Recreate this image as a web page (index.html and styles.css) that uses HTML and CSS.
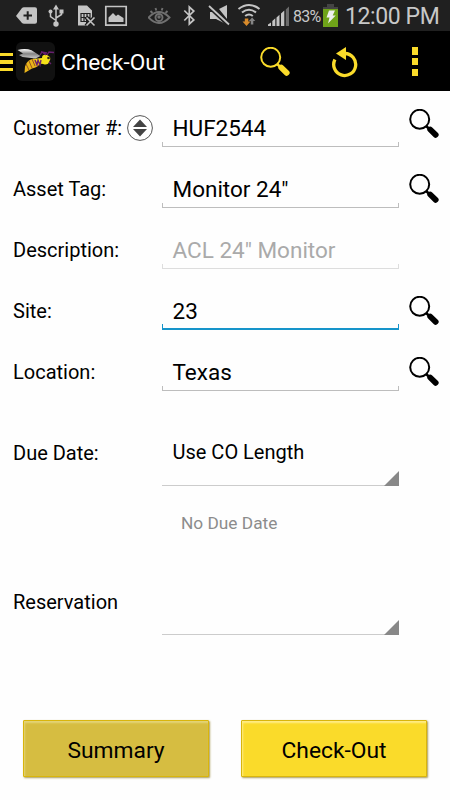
FILE: index.html
```html
<!DOCTYPE html>
<html lang="en">
<head>
<meta charset="utf-8">
<title>Check-Out</title>
<link rel="stylesheet" href="styles.css">
</head>
<body>
<svg width="0" height="0" class="defs">
  <symbol id="search" viewBox="0 0 30 30">
    <circle cx="10.7" cy="10.3" r="9.5" fill="none" stroke="currentColor" stroke-width="2"/>
    <path d="M17.3 17.2l4 3.6" stroke="currentColor" stroke-width="2.6"/>
    <path d="M21.2 20.5l5.500 5.300" stroke="currentColor" stroke-width="5.800" stroke-linecap="round"/>
  </symbol>
</svg>
<div class="status">
  <svg class="notices" width="150" height="31" viewBox="0 0 150 31">
    <path fill="#c4c4c4" d="M16 16l6-8q.7-.8 2-.8h11q2 0 2 2v12.600q0 2-2 2H24q-1.300 0-2-.8z"/>
    <path stroke="#202020" stroke-width="2" d="M23.500 15.500h8.500M27.700 11.300v8.500"/>
    <g fill="none" stroke="#c4c4c4" stroke-width="1.500"><path d="M56 8v16M50.500 12v4.500l5.500 4M61.500 12v2.500L56 18"/></g>
    <path fill="#c4c4c4" d="M56 4.500l3 5h-6zM59.500 9.500h4v4h-4z"/><circle cx="50.500" cy="11.500" r="2" fill="#c4c4c4"/><circle cx="56" cy="24" r="2.700" fill="#c4c4c4"/>
    <path fill="#c4c4c4" d="M78 5.500h9l5 5v7l-2 2-4-2v8h-8z"/>
    <path fill="none" stroke="#202020" stroke-width="1.200" d="M81 13.500h9v8h-9zM81 17.500h9M84 13.500v8M87 13.500v8"/>
    <path stroke="#202020" stroke-width="4" d="M86 17l9 9M95 17l-9 9"/>
    <path stroke="#c4c4c4" stroke-width="1.600" d="M86.500 17.500l8 8M94.500 17.500l-8 8"/>
    <path fill="none" stroke="#c4c4c4" stroke-width="1.700" d="M105.800 6.500h20.400v18.700h-20.400z"/>
    <path fill="#c4c4c4" d="M108.500 22v-4.500l4.500-4.500 3 3 2-1.500 5.500 3.500v4z"/>
  </svg>
  <svg class="signals" width="142" height="31" viewBox="148 0 142 31">
    <g fill="none" stroke="#707070" stroke-width="1.900"><path d="M148.500 17.500q10.500-11 21 0-10.500 11-21 0z"/><circle cx="159" cy="17.500" r="3.500"/><path d="M150.500 11l2 2M155.500 8l.8 2.500M162.500 8l-.8 2.500M167.500 11l-2 2"/></g>
    <circle cx="159" cy="17" r="1.700" fill="#707070"/>
    <path fill="none" stroke="#c4c4c4" stroke-width="1.700" d="M184.300 10.500l9.500 9.500-4.500 4V7l4.500 4-9.500 9.500"/>
    <path fill="#c4c4c4" d="M210 12h5l12 12v.5L216 19h-6zM219 9l8-4v14z"/>
    <path stroke="#202020" stroke-width="4.500" d="M209 6l20 19"/>
    <path stroke="#c4c4c4" stroke-width="1.800" d="M209 6l20 18.500"/>
    <g fill="none" stroke="#c4c4c4" stroke-width="2.100"><path d="M238.500 9q10.500-8 21 0M242 12.500q7-5.500 14 0M245.200 16q3.800-3 7.600 0"/></g>
    <path fill="#d98b2b" d="M244.800 18.500h3.500v3h2.200l-4 4.500-4-4.500h2.300z"/>
    <path fill="#858585" d="M250.800 24.500h2.500V21h2l-3.200-3.500-3.200 3.500h1.900z"/>
    <g fill="#c4c4c4"><path d="M268 26v-1.500l3-2V26zM272.300 26v-5l3-2.800V26zM276.500 26v-8.500l3-2.800V26zM281 26V13.500l3.300-3V26z"/></g>
    <path fill="#6b6b6b" d="M285.800 26V9.500l3.200-3V26z"/>
  </svg>
  <span class="percent">83%</span>
  <svg class="battery" width="15" height="31" viewBox="0 0 15 31">
    <path fill="#444" d="M4 4h7v3h4v2H0V7h4z"/><path fill="#6fa319" d="M0 9h15v18H0z"/>
    <path fill="#eee" d="M6 10.500h6l-2.300 5h3L5 23.500l1.500-6H3.500z"/>
  </svg>
  <span class="clock">12:00 PM</span>
</div>
<header class="bar">
  <div class="burger"><i></i><i></i><i></i></div>
  <svg class="logo" width="39" height="39" viewBox="0 0 39 39">
    <defs><linearGradient id="wing" x2="0" y2="1"><stop stop-color="#fff"/><stop offset=".5" stop-color="#858585"/><stop offset="1" stop-color="#ccc"/></linearGradient></defs>
    <rect width="39" height="39" rx="6" fill="#111"/>
    <path fill="#f5e219" d="M17 17l9-1q0-4 5-3 5 2 2.500 6-1 4-5 3.500-3-1.500-5 0-2 1.500-5 .5z"/>
    <path fill="#e9b51a" d="M18 16.500q-7 1-9 8l-.5 6.500 7.500-4.500q6-1 8-5z"/>
    <path fill="none" stroke="#8c4a20" stroke-width=".9" d="M10 22l3 6M13 19l3 7M16 17l3 7"/>
    <path fill="none" stroke="#67206f" stroke-width="1.300" d="M19 18l2 5 1-5 2 5 1-5M24 13l2-3 4 3M31 13l2-3 5 .5M33 20l2 2M25 10l6 1"/>
    <path fill="url(#wing)" d="M1.500 8q8-2 14 .3l9 5.700-5 2.500-13-1.500L3 13l4-1.500z"/>
    <circle cx="32.500" cy="16" r="1.300" fill="#332a15"/>
  </svg>
  <h1>Check-Out</h1>
  <svg class="find" width="30" height="30"><use href="#search"/></svg>
  <svg class="redo" width="28" height="32" viewBox="0 0 28 32">
    <path fill="none" stroke="#fadb2a" stroke-width="3.300" d="M3.900 13.500A11 11 0 1 0 14 7.500"/>
    <path fill="#fadb2a" d="M5 7.500L15 1v13z"/>
  </svg>
  <div class="more"><i></i><i></i><i></i></div>
</header>
<main>
  <div class="row first"><label>Customer #:</label>
    <svg class="sort" width="26" height="26" viewBox="0 0 26 26"><circle cx="13" cy="13" r="12.400" fill="#fff" stroke="#555"/><path fill="#444" d="M13 4.500l7 7.500H6zM13 21.500l7-7.500H6z"/></svg>
    <div class="field">HUF2544</div><svg class="lens" width="30" height="30"><use href="#search"/></svg></div>
  <div class="row"><label>Asset Tag:</label><div class="field">Monitor 24"</div><svg class="lens" width="30" height="30"><use href="#search"/></svg></div>
  <div class="row"><label>Description:</label><div class="field disabled">ACL 24" Monitor</div></div>
  <div class="row"><label>Site:</label><div class="field focused">23</div><svg class="lens" width="30" height="30"><use href="#search"/></svg></div>
  <div class="row"><label>Location:</label><div class="field">Texas</div><svg class="lens" width="30" height="30"><use href="#search"/></svg></div>
  <div class="row due"><label>Due Date:</label><div class="select">Use CO Length</div></div>
  <p class="note">No Due Date</p>
  <div class="row reservation"><label>Reservation</label><div class="select"></div></div>
  <div class="actions"><button class="summary">Summary</button><button>Check-Out</button></div>
</main>
</body>
</html>
```
FILE: styles.css
```css
* { box-sizing: border-box; }
body { margin: 0; width: 450px; height: 800px; overflow: hidden; background: #fefefe; color: #000; font-family: Roboto, sans-serif; }
svg { display: block; flex: none; }
.defs { position: absolute; }
.status { display: flex; height: 31px; background: #202020; color: #c8c8c8; }
.notices { margin-right: -2px; }
.percent { width: 41px; padding-left: 3px; font-size: 16px; line-height: 33px; letter-spacing: -.8px; }
.clock { margin-left: 7px; font-size: 23px; line-height: 34px; letter-spacing: -.4px; white-space: nowrap; }
.battery { margin-left: -8px; }
.bar { display: flex; height: 60px; background: #000; color: #fff; }
.burger { display: flex; flex-direction: column; gap: 4px; width: 13px; padding-top: 22px; }
.burger i { height: 3.300px; background: #fadb2a; }
.logo { margin: 11px 6px 0 3px; }
h1 { width: 199px; margin: 0; font-size: 22.600px; font-weight: 400; line-height: 63px; }
.find { margin-top: 16px; color: #fadb2a; }
.redo { margin: 15px 0 0 41px; }
.more { display: flex; flex-direction: column; gap: 3.300px; width: 6px; margin: 16px 0 0 53px; }
.more i { height: 7.500px; background: #fadb2a; }
main { display: flex; flex-direction: column; padding-top: 7px; }
.row { display: flex; height: 61px; padding-left: 13px; }
label { width: 149px; font-size: 20px; line-height: 61px; white-space: nowrap; }
.first label { width: 114px; }
.sort { margin: 17px 9px 0 0; }
.field { position: relative; width: 237px; height: 49px; padding-left: 10.500px; border-bottom: 1px solid #bdbdbd; font-size: 22.500px; line-height: 61px; white-space: nowrap; }
.field::after { content: ""; position: absolute; inset: auto 0 0; height: 4px; border: solid #bdbdbd; border-width: 0 1px; }
.disabled { color: #aaa; border-color: #ddd; }
.disabled::after { border-color: #ddd; }
.focused { border-bottom: 2px solid #1694ca; }
.focused::after { border-color: #1694ca; }
.lens { margin: 15px 0 0 10px; }
.first .lens { margin-top: 11px; }
.due { margin-top: 20px; }
.select { position: relative; width: 237px; height: 63px; padding-left: 10.500px; border-bottom: 1px solid #ccc; font-size: 20px; line-height: 59px; }
.select::after { content: ""; position: absolute; right: 0; bottom: -1px; width: 15px; height: 15px; background: #888; clip-path: polygon(100% 0, 100% 100%, 0 100%); }
.note { margin: 25px 0 0 181px; color: #8c8c8c; font-size: 17.300px; line-height: 28px; }
.reservation { margin-top: 35px; }
.actions { display: flex; gap: 32px; margin: 87px 0 0 23px; }
button { width: 186px; height: 57px; padding: 3px 0 0; border: 1px solid #d9b50b; border-radius: 1px; background: #fadb2a; box-shadow: 1px 1px 2px #a99b58, inset 1px 2px 2px #ffed86; color: #000; font: 22.800px Roboto, sans-serif; }
.summary { background: #d6bd41; box-shadow: 1px 1px 2px #a99b58, inset 1px 2px 2px #e4d478; }
```
